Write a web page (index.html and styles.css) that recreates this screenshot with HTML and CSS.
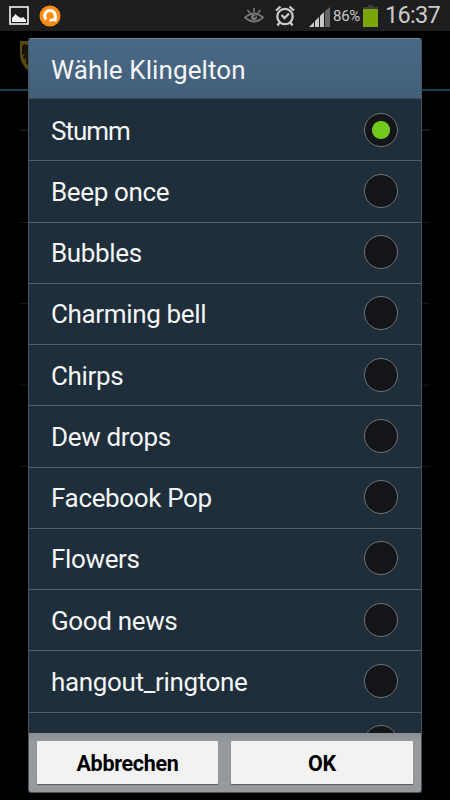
FILE: index.html
```html
<!DOCTYPE html>
<html lang="de">
<head>
    <meta charset="UTF-8">
    <meta name="viewport" content="width=device-width, initial-scale=1.0">
    <title>Wähle Klingelton</title>
    <link rel="stylesheet" href="styles.css">
</head>
<body>
    <div class="statusbar">
        <svg class="icon-picture" width="20" height="19" viewBox="0 0 20 19">
            <rect x="1" y="1" width="18" height="17" fill="#1c1c1c" stroke="#f4f4f4" stroke-width="1.6"/>
            <path d="M3 16v-4l2-2 1.500-2 2 2 1.500 1 2 1 2-1 3 3v2z" fill="#f4f4f4"/>
        </svg>
        <svg class="icon-avast" width="22" height="22" viewBox="0 0 22 22">
            <circle cx="11" cy="11" r="10.500" fill="#f98a12"/>
            <path d="M7.200 14.500A5.300 5.300 0 1 1 16.300 11v5.500" fill="none" stroke="#fff" stroke-width="3"/>
            <path d="M16 13.500q-3 2.500-5.500 1.500" fill="none" stroke="#fff" stroke-width="2.600"/>
        </svg>
        <div class="spacer"></div>
        <svg class="icon-eye" width="20" height="16" viewBox="0 0 20 16" fill="none" stroke="#777" stroke-width="1.700">
            <path d="M1 9.500q9-8 18 0q-9 8-18 0z"/>
            <path d="M10 0v4M3.500 2l2.500 3M16.500 2l-2.500 3"/>
            <circle cx="10" cy="9.300" r="3" fill="#777" stroke="none"/>
            <path d="M10 9.500l2-2" stroke="#1e1e1e" stroke-width="1.200"/>
        </svg>
        <svg class="icon-alarm" width="20" height="22" viewBox="0 0 20 22" fill="none" stroke="#c9c9c9" stroke-width="2.300">
            <circle cx="10" cy="11.500" r="7.700"/>
            <path d="M6.500 10l3 3 4.500-4.500M1 5.500l4.500-4M19 5.500l-4.500-4M4.500 17.500l-2 3M15.500 17.500l2 3"/>
        </svg>
        <svg class="icon-signal" width="21" height="20" viewBox="0 0 21 20" fill="#c9c9c9">
            <path d="M0 20l5-5v5zM6 14l4-4v10h-4zM11 9l4-4v15h-4z"/>
            <path d="M16 4l5-4v20h-5z" fill="#666"/>
        </svg>
        <span class="percent">86%</span>
        <svg class="icon-battery" width="15" height="22" viewBox="0 0 15 22">
            <path d="M5 0h5v2h5v3H0V2h5z" fill="#3d3d3d"/>
            <rect y="4" width="15" height="18" fill="#7aa60a"/>
        </svg>
        <span class="clock">16:37</span>
    </div>

    <div class="screen">
        <div class="backdrop">
            <svg class="crest" width="16" height="34" viewBox="0 0 16 34">
                <path d="M0 0h16v34Q0 27 0 12z" fill="#5a4c08"/>
                <path d="M2 5l2-2 4 1v20l-2-1v-6l-2 2-1-3 2-3-3 1z" fill="#17140b"/>
            </svg>
            <div class="blueline"></div>
            <div class="divider d1"></div>
            <div class="divider d2"></div>
            <div class="divider d3"></div>
            <div class="divider d4"></div>
            <div class="divider d5"></div>
        </div>

        <div class="dialog">
            <h1>Wähle Klingelton</h1>
            <div class="list">
                <label class="row tight">Stumm<input type="radio" name="tone" checked></label>
                <label class="row">Beep once<input type="radio" name="tone"></label>
                <label class="row">Bubbles<input type="radio" name="tone"></label>
                <label class="row">Charming bell<input type="radio" name="tone"></label>
                <label class="row">Chirps<input type="radio" name="tone"></label>
                <label class="row">Dew drops<input type="radio" name="tone"></label>
                <label class="row">Facebook Pop<input type="radio" name="tone"></label>
                <label class="row">Flowers<input type="radio" name="tone"></label>
                <label class="row">Good news<input type="radio" name="tone"></label>
                <label class="row">hangout_ringtone<input type="radio" name="tone"></label>
                <label class="row"><input type="radio" name="tone"></label>
            </div>
            <div class="buttons">
                <button type="button">Abbrechen</button>
                <button type="button">OK</button>
            </div>
        </div>
    </div>
</body>
</html>
```

FILE: styles.css
```css
body {
    font-family: Roboto, sans-serif;
    background-color: #000;
    color: #f5f5f5;
    margin: 0;
    height: 800px;
    overflow: hidden;
}
.statusbar {
    display: flex;
    align-items: center;
    box-sizing: border-box;
    height: 31px;
    padding: 0 11px 0 9px;
    background-color: #1e1e1e;
    color: #c9c9c9;
}
.statusbar svg {
    flex: none;
}
.icon-avast {
    margin-left: 10px;
}
.spacer {
    flex: 1;
}
.icon-alarm {
    margin-left: 11px;
}
.icon-signal {
    margin: 2px 0 0 14px;
}
.percent {
    width: 27px;
    margin-left: 3px;
    font-size: 15px;
    letter-spacing: -0.3px;
    line-height: 32px;
    white-space: nowrap;
}
.icon-battery {
    margin: 1px 0 0 3px;
}
.clock {
    width: 54px;
    margin-left: 7px;
    font-size: 23.500px;
    letter-spacing: -0.7px;
    line-height: 31px;
    white-space: nowrap;
}
.screen {
    position: relative;
    padding: 7px 28px 0;
}
.backdrop {
    position: absolute;
    top: 0;
    left: 0;
    width: 450px;
    height: 769px;
}
.crest {
    position: absolute;
    top: 10px;
    left: 20px;
}
.blueline {
    position: absolute;
    top: 58px;
    width: 450px;
    height: 2px;
    background-color: #0f4258;
}
.divider {
    position: absolute;
    left: 20px;
    width: 410px;
    height: 1px;
    background-color: #141414;
}
.d1 {
    top: 98px;
    height: 2px;
}
.d2 {
    top: 191px;
}
.d3 {
    top: 272px;
}
.d4 {
    top: 353px;
    height: 2px;
    background-color: #0b0b0b;
}
.d5 {
    top: 435px;
}
.dialog {
    position: relative;
    display: flex;
    flex-direction: column;
    box-sizing: border-box;
    width: 394px;
    height: 755px;
    border: 1px solid #49545d;
    border-top-color: #6f8799;
    border-radius: 3px;
    overflow: hidden;
    background-color: #1e2e3b;
}
h1 {
    box-sizing: border-box;
    height: 60px;
    margin: 0;
    padding-left: 22px;
    border-bottom: 1px solid #34495a;
    background: linear-gradient(#486a88, #435f79);
    font-size: 26px;
    font-weight: normal;
    letter-spacing: 0.1px;
    line-height: 62px;
}
.list {
    box-sizing: border-box;
    height: 634px;
    padding-top: 1px;
    overflow: hidden;
}
.row {
    display: flex;
    align-items: center;
    justify-content: space-between;
    box-sizing: border-box;
    height: 61.250px;
    padding: 1px 23px 0 22px;
    border-bottom: 1px solid #53606b;
    font-size: 26px;
    letter-spacing: -0.35px;
}
.tight {
    letter-spacing: -1px;
}
.row input {
    appearance: none;
    box-sizing: border-box;
    width: 34px;
    height: 34px;
    margin: 0 0 2px auto;
    border: 1px solid #707274;
    border-radius: 50%;
    background-color: #141518;
}
.row input:checked {
    background: radial-gradient(circle at 50% 50%, #72c91e 8.500px, #141518 9.500px);
}
.buttons {
    display: flex;
    justify-content: space-between;
    box-sizing: border-box;
    height: 59px;
    padding: 8px 8px;
    background: linear-gradient(#8b8f92, #969a9c 8px);
}
button {
    width: 181px;
    height: 43px;
    padding: 0;
    border: none;
    border-radius: 1px;
    background-color: #f2f2f2;
    box-shadow: 0 1px 1px #55595c;
    color: #000;
    font-family: Roboto, sans-serif;
    font-size: 21.500px;
    font-weight: bold;
    letter-spacing: -0.300px;
    line-height: 45px;
}
button:last-child {
    width: 182px;
}
```
